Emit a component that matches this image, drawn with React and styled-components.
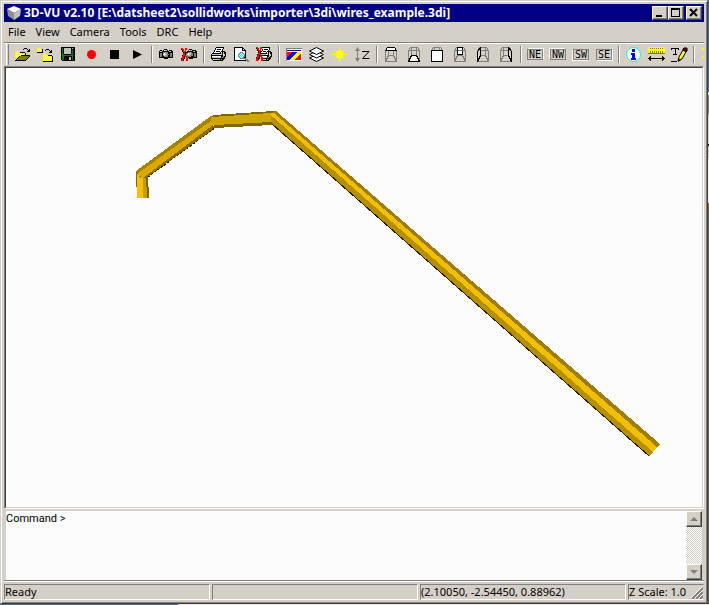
import React from "react";
import styled, { createGlobalStyle, css } from "styled-components";

const face = "#d4d0c8";
const shade = "#808080";
const dark = "#404040";
const paper = "#fcfcfc";
const uiFont = '"Noto Sans", "Open Sans", sans-serif';

const GlobalStyle = createGlobalStyle`
  * { box-sizing: border-box; }
  html, body { margin: 0; height: 100%; overflow: hidden; }
  body { font-family: ${uiFont}; font-size: 11px; color: #000; }
  #root { height: 100%; }
`;

const Desktop = styled.div`
  height: 100vh;
  padding: 0 1px 1px 0;
  background:
    linear-gradient(90deg, #3a6ea5 178px, #ece9d8 178px) bottom / 100% 1px no-repeat,
    linear-gradient(#3a6ea5 92px, #ece9d8 92px, #ece9d8 95px, #808080 95px, #808080 114px,
      #d4d0c8 114px, #d4d0c8 144px, #000 144px, #000 146px, #d4d0c8 146px, #d4d0c8 159px,
      #f4f4f4 159px, #f4f4f4 203px, #8b5a20 203px, #8b5a20 209px, #606060 209px) right / 1px 100% no-repeat;
`;

const Window = styled.main`
  height: 100%;
  display: flex;
  flex-direction: column;
  padding: 2px;
  background: ${face};
  border: 1px solid;
  border-color: ${face} ${dark} ${dark} ${face};
  box-shadow: inset 1px 1px #fff, inset -1px -1px ${shade};
`;

const Body = styled.div`
  flex: 1;
  min-height: 0;
  display: flex;
  flex-direction: column;
  padding: 1px;
`;

const TitleBar = styled.header`
  height: 18px;
  flex: none;
  display: flex;
  align-items: center;
  padding: 0 2px;
  background: #000084;
  color: #fff;
`;

const Title = styled.h1`
  flex: 1;
  margin: 0 0 0 2px;
  font: bold 12px/18px ${uiFont};
  white-space: nowrap;
  overflow: hidden;
`;

const raised = css`
  background: ${face};
  border: 1px solid;
  border-color: #fff ${dark} ${dark} #fff;
  box-shadow: inset -1px -1px ${shade};
`;

const CaptionButton = styled.button`
  ${raised}
  width: 16px;
  height: 14px;
  padding: 0;
  margin-left: ${(p) => (p.$spaced ? "2px" : "0")};
  display: grid;
  place-items: center;
`;

const MenuBar = styled.nav`
  height: 20px;
  flex: none;
  display: flex;
  padding-left: 4px;
  gap: 10px;
`;

const MenuItem = styled.button`
  border: 0;
  padding: 0;
  background: none;
  font: 11px/20px ${uiFont};
  color: #000;
`;

const Toolbar = styled.div`
  height: 24px;
  flex: none;
  display: flex;
  border-top: 1px solid ${shade};
  box-shadow: inset 0 1px #fff;
  padding-left: 2px;
  overflow: hidden;
`;

const Grip = styled.span`
  flex: none;
  width: 3px;
  margin: 1px 2px 1px 0;
  border-left: 1px solid #fff;
  border-right: 1px solid ${shade};
`;

const ToolButton = styled.button`
  flex: none;
  width: 23px;
  border: 0;
  padding: 4px 3px 2px;
  background: none;
  display: flex;
  align-items: flex-start;
`;

const Separator = styled.span`
  flex: none;
  width: 2px;
  margin: 3px 2px;
  border-left: 1px solid ${shade};
  border-right: 1px solid #fff;
`;

const ViewTag = styled.span`
  width: 16px;
  height: 11px;
  margin-top: 2px;
  border: 1px solid ${shade};
  box-shadow: ${(p) => p.$edge} #fff;
  font: 10px/9px "DejaVu Sans Mono", monospace;
  color: #000;
  display: flex;
  justify-content: center;
`;

const Canvas = styled.section`
  flex: 1;
  min-height: 0;
  border: 1px solid;
  border-color: ${shade} #fff #fff ${shade};
  background: ${paper};
  svg {
    display: block;
    width: 100%;
    height: 100%;
    border: 1px solid;
    border-color: ${dark} ${face} ${face} ${dark};
  }
`;

const CommandPane = styled.section`
  flex: none;
  height: 71px;
  margin-top: 2px;
  display: flex;
  padding: 0 2px 1px;
  border-bottom: 1px solid #fff;
  box-shadow: inset 0 -1px ${shade};
`;

const CommandInput = styled.textarea`
  flex: 1;
  resize: none;
  border: 0;
  outline: 0;
  margin: 0;
  padding: 0;
  overflow: hidden;
  background: ${paper};
  color: #000;
  font: 11px/16px Roboto, ${uiFont};
`;

const ScrollTrack = styled.div`
  width: 16px;
  display: flex;
  flex-direction: column;
  justify-content: space-between;
  background: repeating-conic-gradient(${face} 0 25%, #fff 0 50%) 0 0 / 2px 2px;
`;

const ScrollButton = styled.button`
  ${raised}
  width: 16px;
  height: 16px;
  padding: 0;
  display: grid;
  place-items: center;
`;

const StatusBar = styled.footer`
  flex: none;
  height: 16px;
  margin-top: 2px;
  display: grid;
  grid-template-columns: 1fr 1fr 1fr 76px;
  gap: 2px;
`;

const StatusCell = styled.div`
  display: flex;
  justify-content: space-between;
  align-items: flex-end;
  border: 1px solid;
  border-color: ${shade} ${(p) => (p.$last ? face : "#fff")} #fff ${shade};
  font: 11px/14px ${uiFont};
  white-space: nowrap;
`;

const palette = {
  k: "#000", w: "#fff", y: "#ffff00", p: "#ffff90", o: "#808000", g: "#808080",
  l: "#c0c0c0", r: "#ff0000", G: "#008000", b: "#0000ff", c: "#00e5ff", n: "#000084",
};

function Pixels({ rows, width = 17, height = 16 }) {
  const rects = [];
  rows.forEach((row, y) => {
    let x = 0;
    while (x < row.length) {
      let end = x + 1;
      while (end < row.length && row[end] === row[x]) end++;
      if (palette[row[x]]) {
        rects.push(<rect key={`${x}-${y}`} x={x} y={y} width={end - x} height="1" fill={palette[row[x]]} />);
      }
      x = end;
    }
  });
  return (
    <svg width={width} height={height} viewBox={`0 0 ${width} ${height}`} shapeRendering="crispEdges" aria-hidden="true">
      {rects}
    </svg>
  );
}

const openFile = [
  "",
  "..........kkk....",
  ".........k...k.k.",
  "..............kk.",
  "..yyy........kkk.",
  ".ypypykkkkk......",
  ".yypypypypyk.....",
  ".ypypypypypk.....",
  ".yypypykkkkkkkkk.",
  ".ypypkoooooooook.",
  ".yypkoooooooook..",
  ".ypkoooooooook...",
  ".ykoooooooook....",
  ".kkkkkkkkkkk.....",
];
const moveFolder = [
  "",
  "yyy..............",
  "ypypyk...kkk.....",
  "yypypk..k...k.k..",
  "ypypyk.......kk..",
  "kkkkkk......kkk..",
  "",
  "......yyyy.......",
  "......ypypykkkk..",
  "......yypypypyyk.",
  "......ypypypypyk.",
  "......yypypypyyk.",
  "......ypypypypyk.",
  "......yypypypyyk.",
  "......kkkkkkkkkk.",
];
const save = [
  ".kkkkkkkkkkkkkk..",
  ".kGklllllllklkk..",
  ".kGklllllllkkkk..",
  ".kGklllllllkGkk..",
  ".kGklllllllkGkk..",
  ".kGklllllllkGkk..",
  ".kGklllllllkGkk..",
  ".kGGkkkkkkkGGkk..",
  ".kGGGGGGGGGGGkk..",
  ".kGGkkkkkkkkGkk..",
  ".kGGkkkkkllkGkk..",
  ".kGGkkkkkllkGkk..",
  ".kGGkkkkkllkGkk..",
  "..kkkkkkkkkkkkk..",
];
const camera = [
  "", "",
  "......kkk........",
  "..kk.kwllk.kkk...",
  ".kllkkkkkkkllkk..",
  ".kkkkgglggkkkkk..",
  ".kggkgwlggkkggk..",
  ".kggkwwllggkggk..",
  ".kggkgllggkkggk..",
  ".kggkkggggkkggk..",
  ".kkkkkkkkkkkkkk..",
  "......kkkk.......",
];
const cameraOff = [
  "",
  "rr..rr...........",
  "krr.rr..kkk......",
  ".kr.r..kwllkkkk..",
  ".krrr.kkkkkkllkk.",
  "..krkkkgglgkkkkk.",
  "..rrkggwllggkggk.",
  "..rrkgwwllggkggk.",
  ".krrrggllgggkggk.",
  ".rrkrrggggkkkggk.",
  ".rrk.rrkkkkkkkkk.",
  "krrk.rr.kkkk.....",
  "rrk..rr..........",
  "rrk..rr..........",
];
const printer = [
  "......kkkkkkkk...",
  ".....kwwwwwwwk...",
  ".....kwkkkkwk....",
  "....kwwwwwwwk....",
  "....kwkkkkwkkkk..",
  "...kwwwwwwkwklkk.",
  "..kkkkkkkkklklkk.",
  ".kllllllllwlkwlk.",
  ".kkkkkkkkkkkkllk.",
  ".kwwwwwwwwwkklkk.",
  ".kllllllyylklkk..",
  ".kkkkkkkkkkkkkk..",
  "..kwllllllklkk...",
  "...kkkkkkkkkk....",
];
const preview = [
  ".kkkkkkkkk.......",
  ".kwwwwwwwkk......",
  ".kwwwwwwwkwk.....",
  ".kwwwwwwwkkkk....",
  ".kwwwwwwwwwwk....",
  ".kwwwwwgggwwk....",
  ".kwwwwgcwcgwk....",
  ".kwwwgcwcwcgk....",
  ".kwwwgwcwcwgk....",
  ".kwwwgcwcwcgk....",
  ".kwwwwgcwcgkk....",
  ".kwwwwwgggggg....",
  ".kwwwwwwwwwwggg..",
  ".kkkkkkkkkkkkggg.",
  "..............gg.",
];
const printerOff = [
  "rr..rrkkkkkkkk...",
  "krr.rrwwwwwwwk...",
  ".kr.r.kwkkkkwk...",
  ".krrr.kwwwwwk....",
  "..krkkwkkkwkkkk..",
  "..krkwwwwwkwklkk.",
  "..rrkkkkkkklklkk.",
  ".krrrlllllwlkwlk.",
  ".rrkrkkkkkkkkllk.",
  ".rrkrrwwwwwkklkk.",
  "krrk.rrlyylklkk..",
  "rrkk.rrkkkkkkkk..",
  "rrk..rrlllklkk...",
  "rr...rrkkkkkk....",
];
const colours = [
  "",
  ".gggggggggggggggg",
  ".gwwwwwwwwwwwwwww",
  ".gnnnnnnnnnnnnnnw",
  ".gwwwwwwwwwwwwwww",
  ".grrrrrbbbbbyyyyw",
  ".grrrrbbbbbyyyyyw",
  ".grrrbbbbbyyyyyrw",
  ".grrbbbbbyyyyyrrw",
  ".grbbbbbyyyyyrrrw",
  ".gbbbbbyyyyyrrrrw",
  ".gbbbbyyyyyrrrrrw",
  ".gbbbyyyyyrrrrrrw",
  ".gwwwwwwwwwwwwwww",
];
const ruler = [
  "yyyyyyyyyyyyyyyyy",
  "yyoyoyoyoyoyoyoyy",
  "yyyyyyyyyyyyyyyyy",
  "yyyyyyyyyyyyyyyyy",
  "yyoyoyoyoyoyoyoyy",
  "yyoyoyoyoyoyoyoyy",
  "ooooooooooooooooo",
  "",
  "",
  "..k...........k..",
  ".kk...........kk.",
  "kkkkkkkkkkkkkkkkk",
  ".kk...........kk.",
  "..k...........k..",
];
const corners = ["", "..yyyy", "..yy..", "..y...", "......", "......", "......", "......", "......", "...yyy", "..yy..", "..y..."];

const Drawing = ({ children }) => (
  <svg width="17" height="16" viewBox="0 0 17 16" aria-hidden="true">{children}</svg>
);

const sheet = (y) => <path key={y} d={`M8.5 ${y}l7 3.5-7 3.5-7-3.5z`} fill="#fff" stroke="#000" />;

const faces = {
  top: "M2.5 3.5L4.5 0.5H11.5L13.5 3.5Z",
  bottom: "M2.5 14.5L5.5 8.5H10.5L13.5 14.5Z",
  front: "M2.5 3.5H13.5V14.5H2.5Z",
  back: "M5.5 0.5H10.5V7.5H5.5Z",
  left: "M2.5 4.5L5.5 0.5V8.5L2.5 14.5Z",
  right: "M13.5 4.5L10.5 0.5V8.5L13.5 14.5Z",
};
const CubeIcon = ({ side }) => (
  <Drawing>
    <g shapeRendering="crispEdges" fill="none">
      <path stroke={shade} d="M2.5 14.5V3.5H13.5V14.5H2.5L5.5 8.5H10.5L13.5 14.5M2.5 3.5L4.5 0.5H11.5L13.5 3.5M5.5 0.5V8.5M10.5 0.5V8.5" />
      <path stroke="#000" fill={side === "left" || side === "right" ? face : "#fff"} d={faces[side]} />
      {side === "back" && <path stroke={shade} d="M5.5 3.5H10.5" />}
    </g>
  </Drawing>
);

const tagEdges = { NE: "1px -1px", NW: "-1px -1px", SW: "-1px 1px", SE: "1px 1px" };

const toolGroups = [
  [
    ["Open", <Pixels rows={openFile} />],
    ["Import folder", <Pixels rows={moveFolder} />],
    ["Save", <Pixels rows={save} />],
    ["Record", <Drawing><circle cx="8.5" cy="7.5" r="4.5" fill="#f00" /></Drawing>],
    ["Stop", <Drawing><path d="M4 3h9v9H4z" /></Drawing>],
    ["Play", <Drawing><path d="M4 3l9 4.500-9 4.500z" /></Drawing>],
  ],
  [
    ["Snapshot", <Pixels rows={camera} />],
    ["Cancel snapshot", <Pixels rows={cameraOff} />],
  ],
  [
    ["Print", <Pixels rows={printer} />],
    ["Print preview", <Pixels rows={preview} />],
    ["Printer setup", <Pixels rows={printerOff} />],
  ],
  [
    ["Colours", <Pixels rows={colours} />],
    ["Layers", <Drawing>{[7.5, 4, 0.5].map(sheet)}</Drawing>],
    ["Light", <Drawing>
      <path d="M8.500 0v15M1 7.500h15M4 3l9 9M13 3l-9 9" stroke="#ff0" />
      <circle cx="8.5" cy="7.5" r="4" fill="#ff0" />
    </Drawing>],
    ["Z scale", <Drawing>
      <path d="M3.500 2v11" stroke={shade} />
      <path d="M1 4L3.500 0 6 4zM1 11l2.500 4L6 11z" fill={shade} />
      <path d="M8 4.500h7L8.500 11.500H15.500" fill="none" stroke="#000" />
    </Drawing>],
  ],
  ["top", "bottom", "front", "back", "left", "right"].map((s) => [`View ${s}`, <CubeIcon side={s} />]),
  ["NE", "NW", "SW", "SE"].map((d) => [`View ${d}`, <ViewTag $edge={tagEdges[d]}>{d}</ViewTag>]),
  [
    ["Information", <Drawing>
      <circle cx="8.5" cy="7.5" r="7" fill="#fff" stroke="#00f0ff" />
      <path d="M7 2h3v3H7zM6 6h4v5h1v2H6v-2h1V8H6z" fill="#0000f0" shapeRendering="crispEdges" />
    </Drawing>],
    ["Measure", <Pixels rows={ruler} />],
    ["Annotate", <Drawing>
      <path d="M0 1.500h8M4 1v7M2 7.500h4M.5 1v2M7.500 1v2M0 14.500h6" stroke="#000" fill="none" shapeRendering="crispEdges" />
      <path d="M7 14l1-4 5-9 3 2-5 9z" fill="#ff0" stroke="#000" />
      <path d="M13 1h3v3l-1 1-3-2z" fill="#800000" stroke="#000" />
      <path d="M7 15v-4l3 2z" />
    </Drawing>],
  ],
  [["Fit to view", <Pixels rows={corners} />]],
];

const WireModel = () => (
  <svg viewBox="6 68 696 439" preserveAspectRatio="xMinYMin meet" role="img" aria-label="Wire model" shapeRendering="crispEdges">
    <path fill="#806600" d="M136 171L143 174V187H136zM146 174L148 176 149 198H143z" />
    <path fill="#f5c000" d="M137 174L143 176V198H137z" />
    <path fill="#c49b00" d="M143 176H146L147 198H143z" />
    <path fill="#a48200" d="M136 171L211 116H215L214 122L140 178z" />
    <path fill="#dba800" d="M137 174L212 120L215 122 213 126L143 178z" />
    <path fill="#8a6d00" d="M143 178L213 125L215 128L148 177z" />
    <path fill="none" stroke="#201800" strokeDasharray="2 2" d="M148 177L215 128" />
    <path fill="#806600" d="M211 117L214 115L274 111L276 122L272 125L215 128z" />
    <path fill="#cfa500" d="M211 117L271 113L276 121L272 122L215 125L211 122z" />
    <path fill="#a07d00" d="M271 112L276 111L660 444L656 448z" />
    <path fill="#f0bf00" d="M271 113L274 113L657 447L652 452L272 118z" />
    <path fill="#b58f00" d="M271 117L274 118L653 452L649 456L272 124z" />
    <path fill="none" stroke="#201800" d="M272 124L649 456" />
  </svg>
);

export default function App() {
  return (
    <Desktop>
      <GlobalStyle />
      <Window>
        <Body>
          <TitleBar>
            <svg width="16" height="16" viewBox="0 0 16 16" aria-hidden="true">
              <path d="M8 1l7 3-7 4-7-4z" fill="#fff" />
              <path d="M1 4l7 4v7l-6-4z" fill="#909090" />
              <path d="M15 4L8 8v7l6-4z" fill="#c0c0c0" />
            </svg>
            <Title>3D-VU v2.10 [E:\datsheet2\sollidworks\importer\3di\wires_example.3di]</Title>
            <CaptionButton aria-label="Minimize">
              <svg width="12" height="10"><path d="M2 7h6v2H2z" /></svg>
            </CaptionButton>
            <CaptionButton aria-label="Maximize">
              <svg width="12" height="10" shapeRendering="crispEdges"><path d="M1 0h9v9H1zM2 2v6h7V2z" fillRule="evenodd" /></svg>
            </CaptionButton>
            <CaptionButton aria-label="Close" $spaced>
              <svg width="12" height="10"><path d="M2 1l7 7M9 1l-7 7" stroke="#000" strokeWidth="2" /></svg>
            </CaptionButton>
          </TitleBar>
          <MenuBar>
            {["File", "View", "Camera", "Tools", "DRC", "Help"].map((m) => <MenuItem key={m}>{m}</MenuItem>)}
          </MenuBar>
          <Toolbar role="toolbar">
            <Grip />
            {toolGroups.map((group, i) => (
              <React.Fragment key={i}>
                {i > 0 && <Separator />}
                {group.map(([label, icon]) => <ToolButton key={label} aria-label={label}>{icon}</ToolButton>)}
              </React.Fragment>
            ))}
          </Toolbar>
          <Canvas><WireModel /></Canvas>
          <CommandPane>
            <CommandInput aria-label="Command" defaultValue="Command >" spellCheck={false} />
            <ScrollTrack>
              <ScrollButton aria-label="Scroll up">
                <svg width="8" height="5"><path d="M0 4l4-4 4 4z" fill={shade} /></svg>
              </ScrollButton>
              <ScrollButton aria-label="Scroll down">
                <svg width="8" height="5"><path d="M0 0h8L4 4z" fill={shade} /></svg>
              </ScrollButton>
            </ScrollTrack>
          </CommandPane>
          <StatusBar>
            <StatusCell>Ready</StatusCell>
            <StatusCell />
            <StatusCell>(2.10050, -2.54450, 0.88962)</StatusCell>
            <StatusCell $last>
              Z Scale: 1.0
              <svg width="12" height="12" aria-hidden="true">
                <path d="M1 12L12 1M5 12l7-7M9 12l3-3" stroke={shade} strokeWidth="2" />
                <path d="M0 11L11 0M4 11l8-8M8 11l4-4" stroke="#fff" />
              </svg>
            </StatusCell>
          </StatusBar>
        </Body>
      </Window>
    </Desktop>
  );
}
